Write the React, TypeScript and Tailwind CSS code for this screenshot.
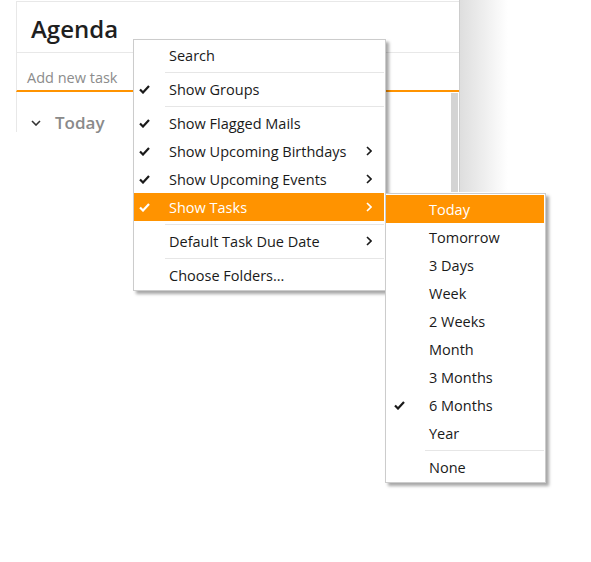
import { Fragment } from "react"

type Item = { label: string; checked?: boolean; sub?: boolean; active?: boolean; sep?: boolean }

const mainItems: Item[] = [
  { label: "Search", sep: true },
  { label: "Show Groups", checked: true, sep: true },
  { label: "Show Flagged Mails", checked: true },
  { label: "Show Upcoming Birthdays", checked: true, sub: true },
  { label: "Show Upcoming Events", checked: true, sub: true },
  { label: "Show Tasks", checked: true, sub: true, active: true, sep: true },
  { label: "Default Task Due Date", sub: true, sep: true },
  { label: "Choose Folders..." },
]

const dueItems: Item[] = [
  { label: "Today", active: true },
  { label: "Tomorrow" },
  { label: "3 Days" },
  { label: "Week" },
  { label: "2 Weeks" },
  { label: "Month" },
  { label: "3 Months" },
  { label: "6 Months", checked: true },
  { label: "Year", sep: true },
  { label: "None" },
]

function Check() {
  return (
    <svg width="11" height="9" viewBox="0 0 11 9">
      <path d="M1 4.5 L4 7.5 L10 1" fill="none" stroke="currentColor" strokeWidth="2.2" />
    </svg>
  )
}

function Chevron() {
  return (
    <svg width="6" height="10" viewBox="0 0 6 10">
      <path d="M1 1 L5 5 L1 9" fill="none" stroke="currentColor" strokeWidth="1.6" />
    </svg>
  )
}

function Menu({ items, checkCol, sepInset }: { items: Item[]; checkCol: string; sepInset: string }) {
  return (
    <div className="flex flex-col py-px pr-px">
      {items.map((it) => (
        <Fragment key={it.label}>
          <div
            className={
              "flex h-[28px] items-center " +
              (it.active ? "bg-[#ff9300] text-white" : "text-[#1a1a1a]")
            }
          >
            <div className={"flex " + checkCol}>{it.checked && <Check />}</div>
            <span className="flex-1 pt-[3px] leading-none">{it.label}</span>
            {it.sub && (
              <div className="flex w-[30px] justify-center">
                <Chevron />
              </div>
            )}
          </div>
          {it.sep && (
            <div className={"flex h-[6px] items-center " + sepInset}>
              <div className="h-px w-full bg-[#e6e6e6]" />
            </div>
          )}
        </Fragment>
      ))}
    </div>
  )
}

export default function App() {
  return (
    <div
      className="relative h-[562px] w-[591px] overflow-hidden bg-white text-[14.5px]"
      style={{ fontFamily: '"Open Sans", "Noto Sans", sans-serif' }}
    >
      <div className="flex">
        <div className="w-[16px]" />
        <div className="flex h-[192px] w-[444px] flex-col border-r border-[#cdcdcd] pt-px">
          {/* Header */}
          <div className="flex h-[52px] items-center border-b border-l border-t border-[#e8e8e8] pl-[14px] pt-[3px]">
            <h1 className="text-[24px] font-semibold leading-none text-[#1f1f1f]">Agenda</h1>
          </div>

          {/* New task input */}
          <div className="h-[39px] border-b-2 border-l border-b-[#ff9300] border-l-[#e8e8e8] pl-[10px] pt-[14px]">
            <span className="leading-[18px] text-[#8c8c8c]">Add new task</span>
          </div>

          {/* List */}
          <div className="flex flex-1">
            <div className="flex-1">
              <div className="flex h-[40px] items-start border-l border-[#e8e8e8] pl-[14px] pt-[21px]">
                <svg width="10" height="6" viewBox="0 0 10 6" className="mr-[14px] mt-[7px] text-[#333]">
                  <path d="M1 1 L5 5 L9 1" fill="none" stroke="currentColor" strokeWidth="1.6" />
                </svg>
                <span className="text-[17px] font-semibold leading-[20px] text-[#8a8a8a]">Today</span>
              </div>
            </div>
            <div className="mr-px mt-px w-[7px] bg-[#d4d4d4]" />
          </div>
        </div>
        <div className="h-[192px] w-[48px] bg-gradient-to-r from-[#dedede] to-white" />
      </div>

      {/* Context menu */}
      <div className="absolute left-[133px] top-[39px] w-[253px] border border-[#cccccc] bg-white shadow-[3px_3px_3px_rgba(0,0,0,0.35)]">
        <Menu items={mainItems} checkCol="w-[35px] pl-[5px]" sepInset="ml-[31px]" />
      </div>

      {/* Due date submenu */}
      <div className="absolute left-[385px] top-[193px] w-[161px] border border-[#cccccc] bg-white shadow-[3px_3px_3px_rgba(0,0,0,0.35)]">
        <Menu items={dueItems} checkCol="w-[43px] pl-[8px]" sepInset="ml-[39px]" />
      </div>
    </div>
  )
}
